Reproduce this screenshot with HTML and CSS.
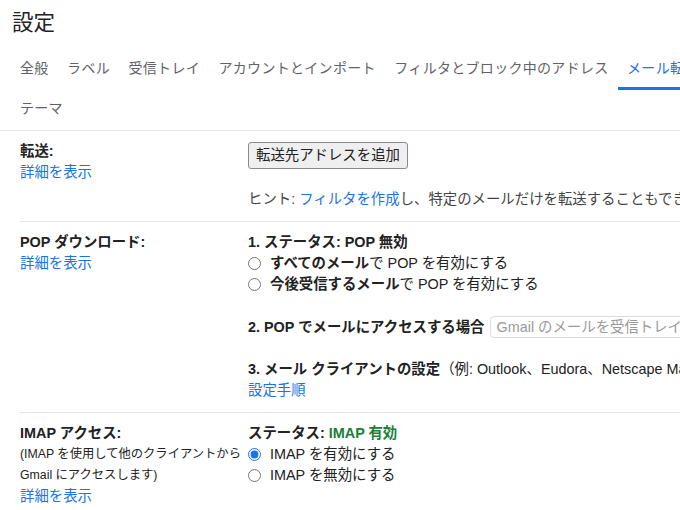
FILE: index.html
```html
<!DOCTYPE html>
<html lang="ja">
<head>
<meta charset="utf-8">
<link rel="stylesheet" href="styles.css">
</head>
<body>
<div class="page">
  <h1 class="title">設定</h1>
  <nav class="tabs">
    <div class="tab-row">
      <span class="tab">全般</span>
      <span class="tab">ラベル</span>
      <span class="tab">受信トレイ</span>
      <span class="tab">アカウントとインポート</span>
      <span class="tab">フィルタとブロック中のアドレス</span>
      <span class="tab active">メール転送と POP/IMAP</span>
    </div>
    <div class="tab-row">
      <span class="tab">テーマ</span>
    </div>
  </nav>

  <section class="section first">
    <div class="label">
      <div class="heading">転送:</div>
      <a class="link">詳細を表示</a>
    </div>
    <div class="content">
      <button class="btn">転送先アドレスを追加</button>
      <div class="hint">ヒント: <a class="link">フィルタを作成</a>し、特定のメールだけを転送することもできます。</div>
    </div>
  </section>

  <section class="section">
    <div class="label">
      <div class="heading">POP ダウンロード:</div>
      <a class="link">詳細を表示</a>
    </div>
    <div class="content">
      <div class="heading">1. ステータス: POP 無効</div>
      <label class="radio"><input type="radio" name="pop"><span><b>すべてのメール</b>で POP を有効にする</span></label>
      <label class="radio"><input type="radio" name="pop"><span><b>今後受信するメール</b>で POP を有効にする</span></label>
      <div class="step">
        <span class="heading">2. POP でメールにアクセスする場合</span>
        <span class="select">Gmail のメールを受信トレイに残す</span>
      </div>
      <div class="step">
        <span class="heading">3. メール クライアントの設定</span>（例: Outlook、Eudora、Netscape Mail）
      </div>
      <a class="link">設定手順</a>
    </div>
  </section>

  <section class="section">
    <div class="label">
      <div class="heading">IMAP アクセス:</div>
      <div class="desc">(IMAP を使用して他のクライアントから<br>Gmail にアクセスします)</div>
      <a class="link">詳細を表示</a>
    </div>
    <div class="content">
      <div class="heading">ステータス: <span class="ok">IMAP 有効</span></div>
      <label class="radio"><input type="radio" name="imap" checked><span>IMAP を有効にする</span></label>
      <label class="radio"><input type="radio" name="imap"><span>IMAP を無効にする</span></label>
    </div>
  </section>
</div>
</body>
</html>
```

FILE: styles.css
```css
html, body {
  margin: 0;
  padding: 0;
  overflow: hidden;
  background: #fff;
}
body {
  font-family: "Liberation Sans", "Noto Sans CJK JP", sans-serif;
  font-size: 14.4px;
  line-height: 21px;
  color: #222;
  width: 680px;
  height: 510px;
}
.page {
  white-space: nowrap;
}
.title {
  margin: 0;
  height: 50px;
  padding-left: 12px;
  font-size: 21.5px;
  font-weight: 400;
  line-height: 46px;
  color: #222;
}
.tabs {
  border-bottom: 1px solid #e4e4e4;
  padding-left: 10.75px;
}
.tab-row {
  display: flex;
  height: 40px;
}
.tab {
  display: block;
  height: 37px;
  line-height: 37px;
  padding: 0 9.25px;
  border-bottom: 3px solid transparent;
  color: #5f6368;
  font-size: 14px;
  letter-spacing: 0.3px;
}
.tab.active {
  color: #1a73e8;
  border-bottom-color: #1a73e8;
}
.section {
  display: grid;
  grid-template-columns: 228px 1fr;
  margin-left: 20px;
  padding: 10px 0 11px;
  border-top: 1px solid #e4e4e4;
}
.section.first {
  border-top: none;
}
.heading {
  font-weight: 700;
}
.link {
  display: block;
  color: #1a73e8;
  text-decoration: none;
}
.hint .link {
  display: inline;
}
.content {
  display: flex;
  flex-direction: column;
  align-items: flex-start;
}
.btn {
  margin-top: 1px;
  font: inherit;
  line-height: 21px;
  color: #222;
  background: #efefef;
  border: 1px solid #8a8a8a;
  border-radius: 3px;
  padding: 2px 7px;
}
.hint {
  margin-top: 20px;
  color: #444;
}
.radio {
  display: flex;
  align-items: center;
  height: 21px;
}
.radio input {
  margin: 0 9px 0 0;
  width: 13px;
  height: 13px;
  accent-color: #1a73e8;
}
.step {
  margin-top: 21px;
  display: flex;
  align-items: center;
}
.step .heading {
  display: inline;
}
.select {
  margin-left: 5px;
  height: 20px;
  line-height: 20px;
  padding: 0 6px;
  border: 1px solid #dcdcdc;
  border-radius: 4px;
  color: #9a9a9a;
}
.step + .step {
  display: block;
}
.desc {
  font-size: 12.3px;
  line-height: 21px;
}
.ok {
  color: #188038;
}
```
